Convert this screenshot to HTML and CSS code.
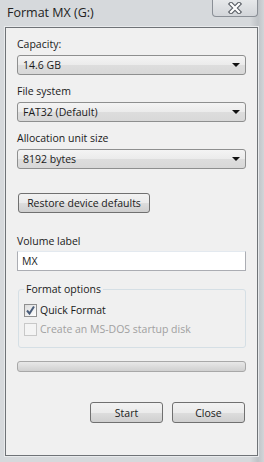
FILE: index.html
```html
<!DOCTYPE html>
<html lang="en">
<head>
    <meta charset="UTF-8">
    <title>Format MX (G:)</title>
    <link rel="stylesheet" href="styles.css">
</head>
<body>
    <div class="window">
        <div class="titlebar">
            <span class="title">Format MX (G:)</span>
            <div class="close-btn">
                <svg width="16" height="12" viewBox="0 0 16 12">
                    <path d="M4 2 L12 10 M12 2 L4 10" stroke="#5a5f66" stroke-width="4.4" stroke-linecap="square"/>
                    <path d="M4 2 L12 10 M12 2 L4 10" stroke="#ffffff" stroke-width="2.2" stroke-linecap="square"/>
                </svg>
            </div>
        </div>
        <div class="client">
            <label class="field-label">Capacity:</label>
            <div class="combo"><span>14.6 GB</span><i class="arrow"></i></div>

            <label class="field-label">File system</label>
            <div class="combo"><span>FAT32 (Default)</span><i class="arrow"></i></div>

            <label class="field-label">Allocation unit size</label>
            <div class="combo"><span>8192 bytes</span><i class="arrow"></i></div>

            <button class="btn restore">Restore device defaults</button>

            <label class="field-label volume">Volume label</label>
            <div class="textbox">MX</div>

            <fieldset class="group">
                <legend>Format options</legend>
                <div class="check">
                    <span class="box">
                        <svg width="11" height="11" viewBox="0 0 11 11"><path d="M2 5.5 L4.5 8.5 L9 1.5" fill="none" stroke="#4a5d7a" stroke-width="2"/></svg>
                    </span>
                    Quick Format
                </div>
                <div class="check disabled">
                    <span class="box"></span>
                    Create an MS-DOS startup disk
                </div>
            </fieldset>

            <div class="progress"></div>

            <div class="actions">
                <button class="btn action">Start</button>
                <button class="btn action">Close</button>
            </div>
        </div>
    </div>
</body>
</html>
```

FILE: styles.css
```css
body {
    margin: 0;
    width: 264px;
    height: 462px;
    background: #ccd0d4;
    font-family: "Open Sans", Arial, sans-serif;
    font-size: 10.5px;
    color: #1a1a1a;
    overflow: hidden;
}
.window {
    height: 462px;
    background: linear-gradient(to right, #d6d9dc 0, #d6d9dc 250px, #bfc3c7 258px, #d2d5d8 264px);
    padding: 0 6px 0 5px;
    box-sizing: border-box;
    display: flex;
    flex-direction: column;
}
.titlebar {
    height: 27px;
    display: flex;
    justify-content: space-between;
    align-items: flex-start;
}
.title {
    margin-top: 4px;
    margin-left: 2px;
    font-size: 12.5px;
    color: #222;
}
.close-btn {
    width: 44px;
    height: 16px;
    border: 1px solid #8a8f96;
    border-top: none;
    border-radius: 0 0 4px 4px;
    background: linear-gradient(#e6e8ea, #d2d5d9);
    display: flex;
    justify-content: center;
    align-items: center;
}
.client {
    height: 427px;
    background: #f0f0f0;
    border: 1px solid #6f7377;
    box-shadow: 0 0 0 1px #e8eaec;
    padding: 0 11px;
    display: flex;
    flex-direction: column;
}
.field-label {
    display: block;
    margin-top: 8px;
    height: 16px;
    line-height: 16px;
}
.field-label.volume {
    margin-top: 20px;
}
.combo {
    margin-top: 3px;
    height: 18px;
    border: 1px solid #8e8f8f;
    border-radius: 3px;
    background: linear-gradient(#f4f4f4, #ebebeb 50%, #dddddd 51%, #d8d8d8);
    display: flex;
    align-items: center;
    justify-content: space-between;
    padding: 0 5px;
}
.arrow {
    width: 0;
    height: 0;
    border-left: 4px solid transparent;
    border-right: 4px solid transparent;
    border-top: 4px solid #111;
}
.btn {
    font-family: inherit;
    font-size: 10.5px;
    color: #1a1a1a;
    height: 20px;
    border: 1px solid #707070;
    border-radius: 3px;
    background: linear-gradient(#f2f2f2, #ebebeb 50%, #dddddd 51%, #cfcfcf);
    padding: 0;
}
.restore {
    margin-top: 24px;
    width: 132px;
    align-self: flex-start;
    margin-left: 1px;
}
.textbox {
    margin-top: 2px;
    height: 18px;
    line-height: 18px;
    border: 1px solid #abadb3;
    border-top-color: #e3e9ef;
    background: #fff;
    padding: 0 4px;
}
.group {
    margin: 11px 0 0 1px;
    padding: 0 6px 0 5px;
    border: 1px solid #d5dfe5;
    border-radius: 3px;
    height: 66px;
    box-sizing: border-box;
}
.group legend {
    padding: 0 2px;
    line-height: 14px;
}
.check {
    display: flex;
    align-items: center;
    gap: 3px;
    height: 16px;
    margin-top: 6px;
}
.check + .check {
    margin-top: 3px;
}
.box {
    width: 11px;
    height: 11px;
    border: 1px solid #8f8f8f;
    background: linear-gradient(135deg, #dcdcdc, #ffffff);
    display: flex;
}
.check.disabled {
    color: #a0a0a0;
}
.check.disabled .box {
    border-color: #c8c8c8;
    background: #f4f4f4;
}
.progress {
    margin-top: 13px;
    height: 9px;
    border: 1px solid #a8a8a8;
    border-radius: 3px;
    background: linear-gradient(#e8e8e8, #dcdcdc 50%, #d0d0d0);
}
.actions {
    margin-top: 30px;
    display: flex;
    justify-content: flex-end;
    gap: 9px;
    padding-right: 1px;
}
.action {
    width: 73px;
    height: 21px;
}
```
